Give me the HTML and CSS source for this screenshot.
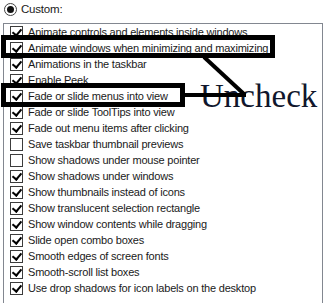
FILE: index.html
```html
<!DOCTYPE html>
<html lang="en">
<head>
  <meta charset="UTF-8">
  <title>Performance Options - Custom</title>
  <link rel="stylesheet" href="styles.css">
</head>
<body>

<div class="page">
  <div class="radio-row">
    <span class="radio"><span class="dot"></span></span>
    <span class="label">Custom:</span>
  </div>

  <div class="listbox">
    <div class="item"><span class="box on"></span>Animate controls and elements inside windows</div>
    <div class="item"><span class="box on"></span>Animate windows when minimizing and maximizing</div>
    <div class="item"><span class="box on"></span>Animations in the taskbar</div>
    <div class="item"><span class="box on"></span>Enable Peek</div>
    <div class="item"><span class="box on"></span>Fade or slide menus into view</div>
    <div class="item"><span class="box on"></span>Fade or slide ToolTips into view</div>
    <div class="item"><span class="box on"></span>Fade out menu items after clicking</div>
    <div class="item"><span class="box"></span>Save taskbar thumbnail previews</div>
    <div class="item"><span class="box"></span>Show shadows under mouse pointer</div>
    <div class="item"><span class="box on"></span>Show shadows under windows</div>
    <div class="item"><span class="box on"></span>Show thumbnails instead of icons</div>
    <div class="item"><span class="box on"></span>Show translucent selection rectangle</div>
    <div class="item"><span class="box on"></span>Show window contents while dragging</div>
    <div class="item"><span class="box on"></span>Slide open combo boxes</div>
    <div class="item"><span class="box on"></span>Smooth edges of screen fonts</div>
    <div class="item"><span class="box on"></span>Smooth-scroll list boxes</div>
    <div class="item"><span class="box on"></span>Use drop shadows for icon labels on the desktop</div>
  </div>

  <!-- annotation drawn over the dialog -->
  <div class="note">Uncheck</div>
  <svg class="marks" width="325" height="303" viewBox="0 0 325 303">
    <rect x="3.5" y="37.5" width="269" height="18" fill="none" stroke="#000" stroke-width="5"/>
    <rect x="3.5" y="85.5" width="179" height="19" fill="none" stroke="#000" stroke-width="5"/>
    <line x1="185" y1="95" x2="246" y2="95" stroke="#000" stroke-width="4"/>
    <line x1="204" y1="57" x2="245" y2="95" stroke="#000" stroke-width="4"/>
  </svg>
</div>

</body>
</html>
```

FILE: styles.css
```css
body {
  margin: 0;
  background-color: #ffffff;
  font-family: 'Liberation Sans', Arial, sans-serif;
  font-size: 11px;
  letter-spacing: -0.2px;
  color: #1a1a1a;
}
.page {
  position: relative;
  width: 325px;
  height: 303px;
  overflow: hidden;
}
.radio-row {
  display: flex;
  align-items: center;
  gap: 4px;
  height: 18px;
  padding-left: 4px;
}
.radio {
  width: 11px;
  height: 11px;
  border: 1px solid #444;
  border-radius: 50%;
  display: flex;
  align-items: center;
  justify-content: center;
}
.dot {
  width: 7px;
  height: 7px;
  border-radius: 50%;
  background-color: #111;
}
.label {
  font-size: 11.5px;
}
.listbox {
  margin: 5px 0 0 3px;
  width: 318px;
  height: 300px;
  border: 1px solid #828790;
}
.item {
  display: flex;
  align-items: center;
  height: 16px;
  white-space: nowrap;
}
.box {
  width: 11px;
  height: 11px;
  border: 1px solid #3c3c3c;
  margin: 0 5px 0 6px;
  flex: none;
  background: #fff;
  display: flex;
  align-items: center;
  justify-content: center;
}
.box.on::after {
  content: "";
  width: 4px;
  height: 7px;
  border-right: 2px solid #000;
  border-bottom: 2px solid #000;
  transform: translate(0, -1px) rotate(40deg);
}
.note {
  position: absolute;
  left: 200px;
  top: 76px;
  font-family: 'Liberation Serif', serif;
  font-size: 33px;
  line-height: 40px;
  letter-spacing: 0;
  color: #10162c;
}
.marks {
  position: absolute;
  left: 0;
  top: 0;
}
```
